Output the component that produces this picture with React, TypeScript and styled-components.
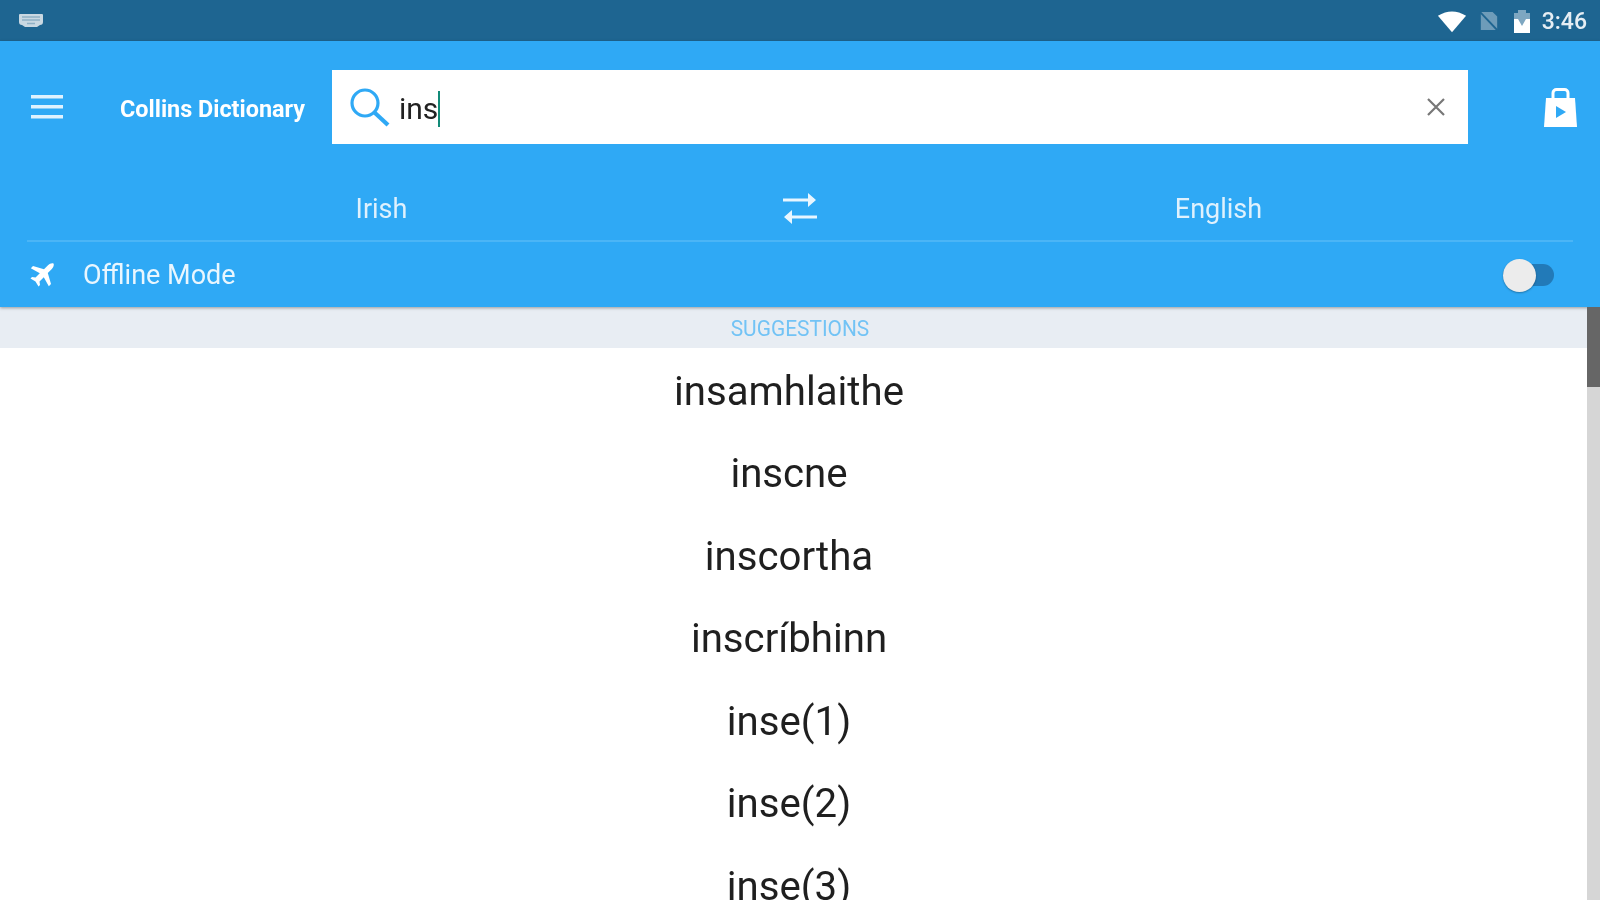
import React from "react";
import styled, { createGlobalStyle } from "styled-components";

const Global = createGlobalStyle`
  html, body { margin: 0; padding: 0; background: #fff; overflow: hidden; }
  body { font-family: Roboto, "Liberation Sans", sans-serif; }
`;
const Screen = styled.div`
  width: 1600px; height: 900px; overflow: hidden; display: flex; flex-direction: column; background: #fff;
  filter: blur(0.6px);
`;
const StatusBar = styled.div`
  height: 41px; flex: none; background: #1e6591; display: flex; align-items: center; padding: 0 13px 0 18px; color: #eef4f8;
`;
const StatusRight = styled.div`
  margin-left: auto; display: flex; align-items: center;
`;
const Clock = styled.span`
  font-size: 23px; font-weight: 500; margin: 2px 0 0 10px; color: #e6eef4;
`;
const Header = styled.header`
  flex: none; height: 266px; background: #2fa9f5; display: flex; flex-direction: column; color: #fff;
  box-shadow: 0 1px 3px rgba(0,0,0,.35); position: relative; z-index: 1;
`;
const TopRow = styled.div`
  height: 132px; flex: none; display: flex; align-items: center; padding: 0 0 0 31px;
`;
const Brand = styled.span`
  font-size: 23.4px; font-weight: 700; width: 212px; margin: 3px 0 0 57px; white-space: nowrap;
`;
const SearchBox = styled.div`
  width: 1136px; height: 74px; background: #fff; display: flex; align-items: center; padding: 0 22px 0 17px; box-sizing: border-box; color: #222;
`;
const Query = styled.span`
  font-size: 30px; margin: 3px 0 0 9px; line-height: 36px; border-right: 2px solid #128a78; height: 36px;
`;
const Clear = styled.div`
  margin-left: auto; display: flex;
`;
const Bag = styled.div`
  margin-left: 76px; display: flex;
`;
const LangRow = styled.div`
  height: 69px; flex: none; margin: 0 27px; padding-top: 4px; box-sizing: border-box;
  display: grid; grid-template-columns: 1fr 40px 1fr; align-items: center;
  border-bottom: 2px solid #4bb5f6; font-size: 27px; color: #dff1fd;
`;
const LangName = styled.span<{ $side: "left" | "right" }>`
  text-align: center;
  ${p => (p.$side === "left" ? "padding-right: 44px;" : "padding-left: 44px;")}
`;
const Swap = styled.div`
  display: flex; justify-content: center;
`;
const OfflineRow = styled.div`
  flex: 1; display: flex; align-items: center; padding: 0 46px 0 30px; font-size: 27px; color: #e9f6fe;
`;
const OfflineLabel = styled.span`
  margin: 1px 0 0 29px;
`;
const Toggle = styled.div`
  margin-left: auto; width: 51px; height: 22px; border-radius: 11px; background: #227ab8; position: relative;
`;
const Thumb = styled.div`
  position: absolute; left: 0; top: -5px; width: 33px; height: 33px; border-radius: 50%; background: #ececec;
  box-shadow: 0 1px 2px rgba(0,0,0,.3);
`;
const Body = styled.div`
  flex: 1; display: flex; min-height: 0;
`;
const Content = styled.main`
  flex: 1; min-width: 0; overflow: hidden;
`;
const SectionBar = styled.div`
  height: 41px; width: 1600px; padding-top: 1px; box-sizing: border-box; background: #e8edf3; overflow: hidden;
`;
const SectionTitle = styled.div`
  height: 40px; color: #72c3f5; font-size: 22px; display: flex; align-items: center; justify-content: center;
  transform: scaleX(.95);
`;
const WordList = styled.div`
  padding: 2px 9px 0 0;
`;
const Word = styled.div`
  height: 82.5px; display: flex; align-items: center; justify-content: center; font-size: 40.2px; color: #1f1f1f;
`;
const Scrollbar = styled.div`
  width: 13px; flex: none; background: #d6d6d6; position: relative; z-index: 2;
`;
const ScrollThumb = styled.div`
  height: 80px; background: #666;
`;

const words = ["insamhlaithe", "inscne", "inscortha", "inscríbhinn", "inse(1)", "inse(2)", "inse(3)"];

export default function App() {
  return (
    <Screen>
      <Global />
      <StatusBar>
        <svg width="26" height="15" viewBox="0 0 26 15">
          <path d="M2 1h22a1 1 0 0 1 1 1v7a3 3 0 0 1-3 3l-3 2H7l-3-2a3 3 0 0 1-3-3V2a1 1 0 0 1 1-1z" fill="#c9d8e2" />
          <path d="M4 4h18M4 7h18M9 10.500h8" stroke="#8fb0c5" strokeWidth="1.500" />
        </svg>
        <StatusRight>
          <svg width="30" height="24" viewBox="0 0 32 24"><path d="M1 6.500Q16-3 31 6.500L16 24z" fill="#fff" /></svg>
          <svg width="20" height="24" viewBox="0 0 22 24" style={{ marginLeft: 12 }}>
            <path d="M2 2h13l5 5v15H2z" fill="#6e9cb9" />
            <path d="M1 2l20 21" stroke="#1e6591" strokeWidth="2" />
          </svg>
          <svg width="20" height="26" viewBox="0 0 20 26" style={{ marginLeft: 13 }}>
            <path d="M6 2h8v3h4v20H2V5h4z" fill="#7ea7c1" />
            <path d="M2 11h4l4 7 4-7h4v14H2z" fill="#fff" />
          </svg>
          <Clock>3:46</Clock>
        </StatusRight>
      </StatusBar>
      <Header>
        <TopRow>
          <svg width="32" height="24" viewBox="0 0 32 24" fill="#dff2fe">
            <rect y="0" width="32" height="3.500" /><rect y="10" width="32" height="3.500" /><rect y="20" width="32" height="3.500" />
          </svg>
          <Brand>Collins Dictionary</Brand>
          <SearchBox>
            <svg width="41" height="41" viewBox="0 0 41 41" fill="none" stroke="#2fa9f5">
              <circle cx="16" cy="16" r="13" strokeWidth="3.200" />
              <path d="M25.500 25.500L39 38" strokeWidth="4.200" />
            </svg>
            <Query>ins</Query>
            <Clear>
              <svg width="20" height="20" viewBox="0 0 20 20" stroke="#777" strokeWidth="2.200"><path d="M2 2l16 16M18 2L2 18" /></svg>
            </Clear>
          </SearchBox>
          <Bag>
            <svg width="33" height="39" viewBox="0 0 33 39">
              <path d="M9 12V5a3.500 3.500 0 0 1 3.500-3.500h8A3.500 3.500 0 0 1 24 5v7" fill="none" stroke="#fff" strokeWidth="3" />
              <path d="M2 10h29l2 29H0z" fill="#fff" />
              <path d="M12 18l10 6-10 6z" fill="#2fa9f5" />
            </svg>
          </Bag>
        </TopRow>
        <LangRow>
          <LangName $side="left">Irish</LangName>
          <Swap>
            <svg width="36" height="31" viewBox="0 0 36 31" fill="#e8f6ff" stroke="none">
              <path d="M1 5.500h25v3H1zM26 0l8 7-8 7z" />
              <path d="M35 22.500H10v3h25zM10 17l-8 7 8 7z" />
            </svg>
          </Swap>
          <LangName $side="right">English</LangName>
        </LangRow>
        <OfflineRow>
          <svg width="24" height="24" viewBox="0 0 24 24" fill="#fff">
            <path d="M23.500.500c-1.500-.800-4 .200-5.500 1.700l-4 4L3 3 .800 5.200l9 5L5.500 14.500 2 14l-1.500 1.500 5 3 3 5L10 22l-.500-3.500 4.300-4.300 5 9L21 21 17.800 10l4-4c1.500-1.500 2.500-4 1.700-5.500z" />
          </svg>
          <OfflineLabel>Offline Mode</OfflineLabel>
          <Toggle><Thumb /></Toggle>
        </OfflineRow>
      </Header>
      <Body>
        <Content>
          <SectionBar><SectionTitle>SUGGESTIONS</SectionTitle></SectionBar>
          <WordList>
            {words.map(w => <Word key={w}>{w}</Word>)}
          </WordList>
        </Content>
        <Scrollbar><ScrollThumb /></Scrollbar>
      </Body>
    </Screen>
  );
}
